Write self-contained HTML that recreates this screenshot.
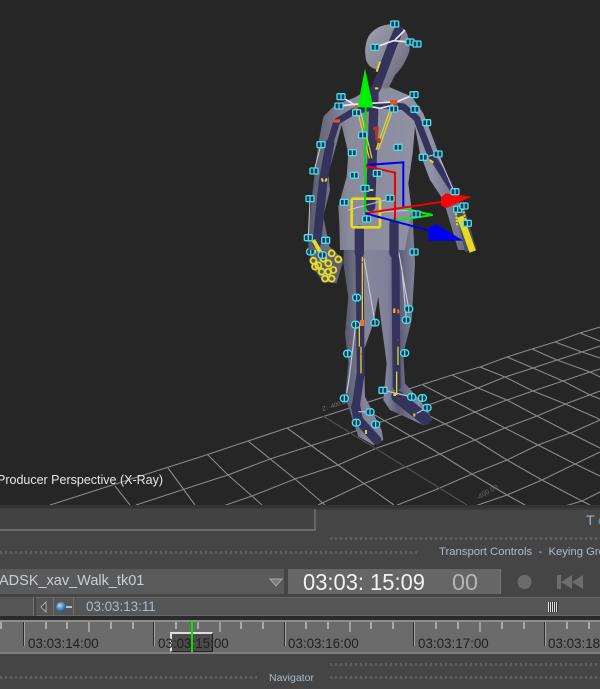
<!DOCTYPE html>
<html>
<head>
<meta charset="utf-8">
<style>
html,body{margin:0;padding:0;width:600px;height:689px;overflow:hidden;background:#454545}
#w{position:absolute;left:0;top:0;width:600px;height:689px;overflow:hidden;background:#454545;filter:blur(.35px)}
#v{position:absolute;left:0;top:0;width:600px;height:507px;background:#262626;display:block}
.a{position:absolute}
.t{position:absolute;font-family:"Liberation Sans",sans-serif;white-space:nowrap}
.dots{position:absolute;height:3px;background:repeating-linear-gradient(90deg,#5e5e5e 0 2px,#474747 2px 5px)}
.tk{position:absolute;background:#a9a9a9;width:2px;top:622px;height:7px}
.md{position:absolute;background:#a0a0a0;width:2px;top:622px;height:10px}
.mj{position:absolute;background:#2c2c2c;width:1px;top:622px;height:24px;box-shadow:1px 0 0 #a4a4a4}
.lb{position:absolute;top:636px;font:13.4px "Liberation Sans",sans-serif;color:#202020;white-space:nowrap}
</style>
</head>
<body>
<div id="w">
<svg id="v" viewBox="0 0 600 507" xmlns="http://www.w3.org/2000/svg">
<defs>
<g id="m" fill="#2a3a4c" stroke="#3fe2f6" stroke-width="4"><rect x="-12" y="-9" width="24" height="18" rx="3"/><path d="M0-9V9"/></g>
<g id="r" fill="#2a3a4c" stroke="#3fe2f6" stroke-width="4"><rect x="-12" y="-10" width="24" height="20" rx="9"/><path d="M0-10V10"/></g>
<linearGradient id="b1" x1="0" x2="1" y1="0" y2="0"><stop offset="0" stop-color="#5a5a6c"/><stop offset=".25" stop-color="#8a8a9c"/><stop offset=".75" stop-color="#9292a6"/><stop offset="1" stop-color="#62627a"/></linearGradient>
<linearGradient id="b2" x1="0" x2="1" y1="0" y2="1"><stop offset="0" stop-color="#a0a0ae"/><stop offset=".6" stop-color="#808092"/><stop offset="1" stop-color="#5c5c6e"/></linearGradient>
<linearGradient id="l1" x1="0" x2="1" y1="0" y2="0"><stop offset="0" stop-color="#55556a"/><stop offset=".25" stop-color="#85859a"/><stop offset=".5" stop-color="#80809a"/><stop offset=".62" stop-color="#5a5a74"/><stop offset=".85" stop-color="#8a8a9e"/><stop offset="1" stop-color="#5c5c72"/></linearGradient>
</defs>
<!-- grid -->
<g fill="none" stroke="#8a8a8a" stroke-width="1.1">
<path d="M50 505 200 457 248 441 287 428 325 416 452 375 480 367 507 357 532 349 555 342 580 333 600 327"/>
<path d="M136 505 200 484 228 475 270 459 310 446 350 433 448 398 478 388 505 377 533 368 557 360 582 352 600 346"/>
<path d="M223 506 252 496 295 479 338 465 377 448 445 424 475 412 507 400 533 391 563 381 590 372 600 369"/>
<path d="M318 505 363 484 400 469 440 454 475 440 505 428 537 416 568 403 600 391"/>
<path d="M395 506 435 490 472 474 507 460 538 445 573 432 600 420"/>
<path d="M475 506 507 495 542 480 575 464 600 452"/>
<path d="M565 506 582 501 600 492"/>
<path d="M115 486 130 505M168 468 195 505M207 454 228 475 252 496 262 505M248 441 295 479 325 505M287 428 338 465 394 505"/>
<path d="M358 405 412 437 440 454 472 474 507 495 525 505M390 395 445 424 475 440 507 460 542 480 582 501 590 505M423 385 448 398 475 412 505 428 538 445 575 464 600 476M452 375 478 388 507 400 537 416 568 432 600 448M480 367 505 377 533 391 563 403 597 418 600 420M507 357 533 368 563 381 590 395 600 399M532 349 557 360 590 372 600 377M555 342 582 352 600 358M580 333 600 341"/>
<path d="M323 416 467 505" stroke="#525252"/>
</g>
<text x="323" y="411" font-family="Liberation Sans,sans-serif" font-size="6" fill="#777" transform="rotate(-18 323 411)">Z: -400.00</text>
<text x="478" y="500" font-family="Liberation Sans,sans-serif" font-size="7" fill="#666" transform="rotate(-30 478 500)">-400.00</text>
<text x="-3" y="484" font-family="Liberation Sans,sans-serif" font-size="13" fill="#e6e6e6" textLength="166" lengthAdjust="spacingAndGlyphs">Producer Perspective (X-Ray)</text>

<!-- legs -->
<g transform="translate(290 230) scale(.33333)">
<path fill="url(#l1)" d="M165-40 160 100 175 200 165 310 175 400 165 500 205 620 250 645 280 630 275 600 225 500 222 360 250 280 265 200 270 250 290 400 280 510 300 540 400 585 425 570 415 540 345 460 340 370 365 270 375 100 368-40Z"/>
<g fill="none" stroke="#33335c" stroke-linecap="round" stroke-linejoin="round">
<path stroke-width="24" d="M207-20 210 200 212 430 197 530"/>
<path stroke-width="28" d="M197 530 205 570 260 630"/>
<path stroke-width="24" d="M316-30 318 300 320 470"/>
<path stroke-width="36" d="M322 500 405 567"/>
</g>
<g fill="none" stroke="#c8c8da" stroke-width="3.500">
<path d="M222 85 255 278M325 60 356 237M335 110 349 270M197 284 178 440 170 490M320 490 279 481M320 490 365 501M205 545 240 546M380 550 411 533"/>
</g>
<g fill="none" stroke="#e0d51e" stroke-width="4">
<path d="M217 60V270M208 285V350M213 350V430M324 350V405M320 425V495"/>
</g>
<path fill="#ff6a2a" d="M210 270h12v18h-12zM322 238h6v12h-6z"/>
<path fill="#e0d51e" d="M310 235h6v14h-6zM310 490h8v8h-8zM225 600h6v12h-6zM370 550h6v10h-6z"/>
<path fill="#c03a20" d="M215 95h4v4h-4zM310 68h3v3h-3zM322 328h4v4h-4zM213 370h4v4h-4zM325 505h3v3h-3z"/>
<!-- left hand rings -->
<path fill="#5e5e76" d="M55 10 120 50 160 90 140 160 100 155 65 110Z"/>
<g fill="none" stroke="#eadf1c" stroke-width="5.500">
<path d="M75 25 72 70" stroke-width="12"/>
<circle cx="70" cy="92" r="9"/><circle cx="85" cy="106" r="9"/><circle cx="100" cy="86" r="9"/><circle cx="125" cy="70" r="9"/><circle cx="145" cy="88" r="9"/><circle cx="115" cy="100" r="9"/><circle cx="75" cy="110" r="9"/><circle cx="95" cy="125" r="9"/><circle cx="115" cy="125" r="9"/><circle cx="130" cy="120" r="9"/><circle cx="105" cy="146" r="9"/><circle cx="125" cy="146" r="9"/>
</g>
<use href="#r" x="57" y="23"/><use href="#r" x="106" y="30"/><use href="#r" x="62" y="65"/><use href="#r" x="97" y="75"/><use href="#m" x="372" y="66"/><use href="#r" x="200" y="203"/><use href="#r" x="356" y="237"/><use href="#r" x="349" y="270"/><use href="#r" x="197" y="284"/><use href="#r" x="255" y="278"/><use href="#r" x="344" y="369"/><use href="#r" x="173" y="371"/><use href="#m" x="279" y="481"/><use href="#r" x="365" y="501"/><use href="#r" x="397" y="504"/><use href="#r" x="411" y="533"/><use href="#r" x="163" y="505"/><use href="#r" x="240" y="546"/><use href="#r" x="199" y="578"/><use href="#r" x="257" y="583"/>
</g>

<!-- upper body -->
<g transform="translate(280 10) scale(.33333)">
<path fill="url(#b1)" d="M130 320 165 285 225 262 285 225 325 230 395 260 430 310 465 400 500 500 535 570 575 720 535 720 490 570 450 510 420 430 405 350 398 430 385 520 395 600 375 720 180 720 178 640 175 590 200 500 205 430 185 345 170 400 145 490 150 540 130 620 150 720 85 720 85 660 95 570 105 480 115 400Z"/>
<path fill="url(#b2)" d="M300 50Q340 32 375 60 392 85 388 125 372 170 345 195L325 235H285L300 180Q268 178 258 150 250 110 266 78 278 60 300 50Z"/>
<g fill="none" stroke="#33335c" stroke-linecap="round" stroke-linejoin="round">
<path stroke-width="28" d="M355 62 335 110 305 190 288 235"/>
<path stroke-width="28" d="M282 240 280 330 272 590"/>
<path stroke-width="20" d="M280 290 220 305 170 335 150 400"/>
<path stroke-width="26" d="M150 400 130 510 110 700"/>
<path stroke-width="20" d="M300 285 370 290 410 325 450 430 520 540"/>
<path stroke-width="28" d="M238 660V730M342 640V730"/>
</g>
<g fill="none" stroke="#e8e8f0" stroke-width="5">
<path d="M175 288 235 282 340 276M230 282 300 295 340 285M285 112 340 92 390 96 411 102M345 90 375 60M183 260 225 285M402 254 345 278"/>
<path stroke-width="3" stroke="#c8c8d8" d="M123 404 102 483M90 566 85 683M430 442 474 432 520 540M205 600 335 565M250 610 400 600"/>
</g>
<g fill="none" stroke="#e6db1e" stroke-width="3.500">
<path d="M232 300 268 445M240 298 276 445M330 300 288 420M337 302 295 420"/>
<path stroke-width="6" d="M285 235l10 0M300 155l-10 30M450 450l10 8M125 505l4 10M140 505l-4 10M265 540h15"/>
</g>
<path fill="#e05522" d="M160 328h20v10h-20zM330 270h22v14h-22zM222 288h12v10h-12z"/>
<path fill="#a83a1e" d="M280 350h16v10l-4 30h-6l-2-30h-6zM290 385h12v14h-12z"/>
<!-- right hand -->
<path fill="#4d4d66" d="M525 590 555 600 590 720 555 725Z"/>
<path fill="none" stroke="#e6db1e" stroke-width="20" d="M540 620 555 660 578 725"/>
<path fill="none" stroke="#e6db1e" stroke-width="6" stroke-dasharray="6 4" d="M527 600 532 650M548 595 560 640"/>
<!-- left hand top -->
<path fill="none" stroke="#e6db1e" stroke-width="12" d="M100 690 120 725"/>
<!-- gizmo -->
<rect x="215" y="566" width="85" height="86" rx="5" fill="none" stroke="#e6db22" stroke-width="8"/>
<g fill="none" stroke-width="6">
<path stroke="#0d0" d="M257 285 255 610"/>
<path stroke="#0e0" d="M255 610 345 632 458 615 375 596"/>
<path stroke="#00e" d="M260 465 370 457 370 595"/>
<path stroke="#e00" d="M258 468 345 488 345 630"/>
<path stroke="#e00" d="M255 610 490 575"/>
<path stroke="#00e" d="M255 610 460 665"/>
</g>
<path fill="#00f000" d="M255 175 233 292H280Z"/>
<path fill="#f00808" d="M483 562 497 550 575 560 497 595 483 585Z"/>
<path fill="#0000f0" d="M445 655 468 642 550 692 445 692Z"/>
<g><use href="#m" x="344" y="42"/><use href="#m" x="285" y="112"/><use href="#m" x="390" y="96"/><use href="#m" x="411" y="102"/><use href="#m" x="183" y="260"/><use href="#m" x="177" y="288"/><use href="#m" x="402" y="254"/><use href="#m" x="405" y="298"/><use href="#m" x="341" y="297"/><use href="#m" x="230" y="308"/><use href="#m" x="440" y="338"/><use href="#m" x="123" y="404"/><use href="#m" x="248" y="375"/><use href="#m" x="354" y="412"/><use href="#m" x="217" y="428"/><use href="#m" x="430" y="442"/><use href="#m" x="474" y="432"/><use href="#m" x="102" y="483"/><use href="#m" x="223" y="496"/><use href="#m" x="292" y="490"/><use href="#m" x="90" y="566"/><use href="#m" x="193" y="577"/><use href="#m" x="330" y="565"/><use href="#m" x="255" y="535"/><use href="#m" x="525" y="545"/><use href="#m" x="533" y="598"/><use href="#m" x="552" y="588"/><use href="#m" x="562" y="640"/><use href="#m" x="260" y="627"/><use href="#m" x="408" y="612"/><use href="#m" x="85" y="683"/><use href="#m" x="137" y="691"/></g>
</g>
</svg>

<!-- top panel -->
<div class="a" style="left:0;top:505px;width:600px;height:3px;background:#333"></div>
<div class="a" style="left:0;top:508px;width:600px;height:2px;background:#3a3a3a"></div>
<div class="a" style="left:0;top:509px;width:314px;height:20px;background:#434343;border-right:2px solid #666;border-bottom:2px solid #6a6a6a"></div>
<div class="t" style="left:586px;top:512px;font-size:14px;color:#9fb2c4">T</div>
<div class="t" style="left:598px;top:512px;font-size:14px;color:#5f8fb5">c</div>
<div class="dots" style="left:330px;top:537px;width:270px"></div>
<div class="dots" style="left:0;top:551px;width:420px"></div>
<div class="t" style="left:439px;top:546px;font-size:11.3px;color:#a9bccd">Transport Controls &nbsp;-&nbsp; Keying Gro</div>

<!-- clip bar -->
<div class="a" style="left:0;top:569px;width:284px;height:25px;background:#5a5a5a"></div>
<div class="t" style="left:-1px;top:573px;font-size:14.5px;color:#c6d0da">ADSK_xav_Walk_tk01</div>
<svg class="a" style="left:268px;top:578px" width="16" height="10"><path d="M2 1H14L8 8Z" fill="#777" stroke="#aaa"/></svg>
<div class="a" style="left:288px;top:569px;width:213px;height:25px;background:#666;border-right:1px solid #777;box-sizing:border-box"></div>
<svg class="a" style="left:288px;top:569px" width="213" height="25">
<text x="15" y="21" font-family="Liberation Sans,sans-serif" font-size="23" fill="#f2f2f2" textLength="122" lengthAdjust="spacingAndGlyphs">03:03: 15:09</text>
<text x="164" y="21" font-family="Liberation Sans,sans-serif" font-size="23" fill="#b5b5b5" textLength="26" lengthAdjust="spacingAndGlyphs">00</text>
</svg>
<svg class="a" style="left:510px;top:570px" width="90" height="26">
<circle cx="14.500" cy="12" r="7" fill="#6b6b6b"/>
<path d="M47 5h4v14h-4zM51 12 62 5V19ZM62 12 73 5V19Z" fill="#6d6d6d"/>
</svg>

<!-- nav bar -->
<div class="a" style="left:0;top:597px;width:33px;height:19px;background:#555;border-right:1px solid #777;border-bottom:1px solid #6a6a6a"></div>
<div class="a" style="left:36px;top:597px;width:564px;height:19px;background:#565656;border-top:1px solid #686868;border-bottom:1px solid #686868;box-sizing:border-box"></div>
<div class="a" style="left:36px;top:597px;width:18px;height:19px;border-right:1px solid #717171;box-sizing:border-box"></div>
<div class="a" style="left:55px;top:597px;width:19px;height:19px;border-right:1px solid #717171;box-sizing:border-box"></div>
<svg class="a" style="left:36px;top:597px" width="40" height="20">
<path d="M10 5 5 10 10 15Z" fill="#444" stroke="#aaa"/>
<defs><radialGradient id="ball" cx=".4" cy=".35" r=".7"><stop offset="0" stop-color="#b7dcf5"/><stop offset=".5" stop-color="#4f8fc4"/><stop offset="1" stop-color="#1d4a78"/></radialGradient></defs>
<rect x="26" y="9" width="10" height="2" fill="#bbb"/>
<circle cx="25" cy="10" r="5" fill="url(#ball)"/>
</svg>
<div class="t" style="left:86px;top:599px;font-size:13.4px;color:#abbdcd">03:03:13:11</div>
<div class="a" style="left:548px;top:602px;width:10px;height:10px;background:repeating-linear-gradient(90deg,#ddd 0 1px,#333 1px 2px)"></div>

<!-- ruler -->
<div class="a" style="left:0;top:616px;width:600px;height:4px;background:#2a2a2a"></div>
<div class="a" style="left:0;top:620px;width:600px;height:34px;background:#6b6b6b;border-top:2px solid #8c8c8c;border-bottom:2px solid #7e7e7e;box-sizing:border-box"></div>
<div class="tk" style="left:0"></div>
<div class="mj" style="left:23px"></div><div class="mj" style="left:153px"></div><div class="mj" style="left:284px"></div><div class="mj" style="left:413px"></div><div class="mj" style="left:544px"></div>
<div class="md" style="left:88px"></div><div class="md" style="left:219px"></div><div class="md" style="left:349px"></div><div class="md" style="left:479px"></div>
<div class="tk" style="left:45px"></div><div class="tk" style="left:66px"></div><div class="tk" style="left:110px"></div><div class="tk" style="left:132px"></div><div class="tk" style="left:175px"></div><div class="tk" style="left:197px"></div><div class="tk" style="left:240px"></div><div class="tk" style="left:262px"></div><div class="tk" style="left:305px"></div><div class="tk" style="left:327px"></div><div class="tk" style="left:370px"></div><div class="tk" style="left:392px"></div><div class="tk" style="left:435px"></div><div class="tk" style="left:457px"></div><div class="tk" style="left:501px"></div><div class="tk" style="left:523px"></div><div class="tk" style="left:566px"></div><div class="tk" style="left:588px"></div>
<div class="a" style="left:170px;top:632px;width:43px;height:20px;background:#4b4b4b;border-left:2px solid #ddd;border-top:2px solid #ddd;border-right:1px solid #222;border-bottom:1px solid #222;box-sizing:border-box"></div>
<div class="lb" style="left:28px">03:03:14:00</div>
<div class="lb" style="left:158px">03:03:15:00</div>
<div class="lb" style="left:288px">03:03:16:00</div>
<div class="lb" style="left:418px">03:03:17:00</div>
<div class="lb" style="left:548px">03:03:18:00</div>
<div class="a" style="left:191px;top:622px;width:2px;height:30px;background:#00e800"></div>

<!-- bottom -->
<div class="dots" style="left:330px;top:663px;width:270px"></div>
<div class="dots" style="left:0;top:676px;width:258px"></div>
<div class="dots" style="left:330px;top:676px;width:270px"></div>
<div class="t" style="left:269px;top:672px;font-size:10.5px;color:#a9bccd">Navigator</div>
</div>
</body>
</html>
